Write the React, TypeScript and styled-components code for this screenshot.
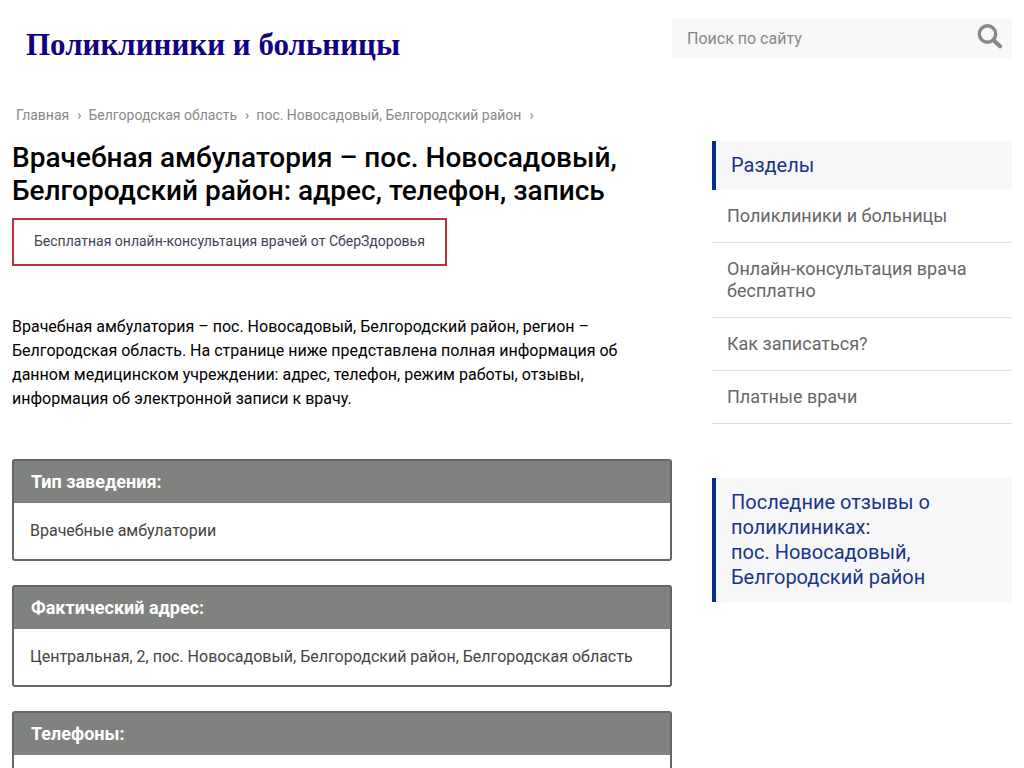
import React from "react";
import styled, { createGlobalStyle } from "styled-components";

const GlobalStyle = createGlobalStyle`
  *, *::before, *::after { box-sizing: border-box; }
  body {
    margin: 0;
    background: #fff;
    color: #000;
    font: 16px/24px Roboto, "Open Sans", sans-serif;
  }
  h1, h2, p, ul, ol { margin: 0; padding: 0; }
  ul, ol { list-style: none; }
  a { color: inherit; text-decoration: none; }
`;

const Page = styled.div`
  max-width: 1200px;
  margin: 0 auto;
  padding: 0 12px;
`;

const Header = styled.header`
  display: flex;
  align-items: flex-start;
  justify-content: space-between;
  gap: 40px;
  padding-top: 18px;
`;

const Logo = styled.a`
  padding: 9px 14px;
  color: #140082;
  font: bold 31px/36px "Liberation Serif", serif;
`;

const SearchForm = styled.form`
  display: flex;
  flex: 0 0 340px;
  height: 40px;
  background: #f7f7f7;
`;

const SearchInput = styled.input`
  flex: 1;
  min-width: 0;
  padding: 2px 15px 0;
  border: 0;
  background: transparent;
  color: #444;
  font: inherit;
  &::placeholder { color: #888; opacity: 1; }
`;

const SearchButton = styled.button`
  display: flex;
  align-items: flex-start;
  padding: 6px 9px;
  border: 0;
  background: transparent;
  color: #888;
  cursor: pointer;
`;

const Breadcrumbs = styled.ol`
  display: flex;
  flex-wrap: wrap;
  padding: 31px 4px 0;
  color: #888;
  font-size: 14px;
`;

const Crumb = styled.li`
  &::after { content: "›"; padding: 0 7px 0 8px; }
`;

const Columns = styled.div`
  display: flex;
  align-items: flex-start;
  gap: 40px;
  padding-top: 14px;
`;

const Main = styled.main`
  flex: 1;
  min-width: 0;
`;

const Title = styled.h1`
  font-size: 28px;
  line-height: 33px;
  font-weight: 500;
`;

const Consultation = styled.a`
  display: inline-block;
  margin-top: 11px;
  padding: 9px 20px 11px;
  border: 2px solid #b6343c;
  color: #3f4255;
  font-size: 14px;
`;

const Intro = styled.p`
  padding: 49px 0 48px;
`;

const Card = styled.section`
  margin-bottom: 24px;
  border: 2px solid #666;
  border-radius: 3px;
`;

const CardTitle = styled.h2`
  padding: 9px 17px;
  background: #80827f;
  color: #fff;
  font-size: 18px;
  line-height: 24px;
  font-weight: 700;
`;

const CardBody = styled.p`
  min-height: 56px;
  padding: 16px;
  color: #444;
`;

const Sidebar = styled.aside`
  display: flex;
  flex: 0 0 300px;
  flex-direction: column;
  gap: 54px;
`;

const SideTitle = styled.h2`
  padding: 12px 15px;
  border-left: 4px solid #003087;
  background: #f7f7f7;
  color: #18348b;
  font-size: 20px;
  line-height: 25px;
  font-weight: 400;
`;

const SideLink = styled.a`
  display: block;
  padding: 15px;
  border-bottom: 1px solid #ddd;
  color: #666;
  font-size: 18px;
  line-height: 22px;
`;

const crumbs = ["Главная", "Белгородская область", "пос. Новосадовый, Белгородский район"];

const sections = [
  "Поликлиники и больницы",
  "Онлайн-консультация врача бесплатно",
  "Как записаться?",
  "Платные врачи",
];

const details = [
  { title: "Тип заведения:", text: "Врачебные амбулатории" },
  {
    title: "Фактический адрес:",
    text: "Центральная, 2, пос. Новосадовый, Белгородский район, Белгородская область",
  },
  { title: "Телефоны:", text: "" },
];

const SearchIcon = () => (
  <svg width="26" height="26" viewBox="0 0 26 26" fill="none" stroke="currentColor" aria-hidden="true">
    <circle cx="10.5" cy="10" r="8.2" strokeWidth="3.4" />
    <path d="M16.5 16.2 23 22.3" strokeWidth="4.2" strokeLinecap="round" />
  </svg>
);

export default function App() {
  return (
    <>
      <GlobalStyle />
      <Page>
        <Header>
          <Logo href="#">Поликлиники и больницы</Logo>
          <SearchForm role="search" onSubmit={(e) => e.preventDefault()}>
            <SearchInput type="text" placeholder="Поиск по сайту" aria-label="Поиск по сайту" />
            <SearchButton type="submit" aria-label="Поиск">
              <SearchIcon />
            </SearchButton>
          </SearchForm>
        </Header>
        <nav>
          <Breadcrumbs>
            {crumbs.map((name) => (
              <Crumb key={name}>
                <a href="#">{name}</a>
              </Crumb>
            ))}
          </Breadcrumbs>
        </nav>
        <Columns>
          <Main>
            <Title>Врачебная амбулатория – пос. Новосадовый, Белгородский район: адрес, телефон, запись</Title>
            <Consultation href="#">Бесплатная онлайн-консультация врачей от СберЗдоровья</Consultation>
            <Intro>
              Врачебная амбулатория – пос. Новосадовый, Белгородский район, регион – Белгородская область. На
              странице ниже представлена полная информация об данном медицинском учреждении: адрес, телефон,
              режим работы, отзывы, информация об электронной записи к врачу.
            </Intro>
            {details.map(({ title, text }) => (
              <Card key={title}>
                <CardTitle>{title}</CardTitle>
                <CardBody>{text}</CardBody>
              </Card>
            ))}
          </Main>
          <Sidebar>
            <nav>
              <SideTitle>Разделы</SideTitle>
              <ul>
                {sections.map((name) => (
                  <li key={name}>
                    <SideLink href="#">{name}</SideLink>
                  </li>
                ))}
              </ul>
            </nav>
            <SideTitle>
              Последние отзывы о поликлиниках:
              <br />
              пос. Новосадовый, Белгородский район
            </SideTitle>
          </Sidebar>
        </Columns>
      </Page>
    </>
  );
}
